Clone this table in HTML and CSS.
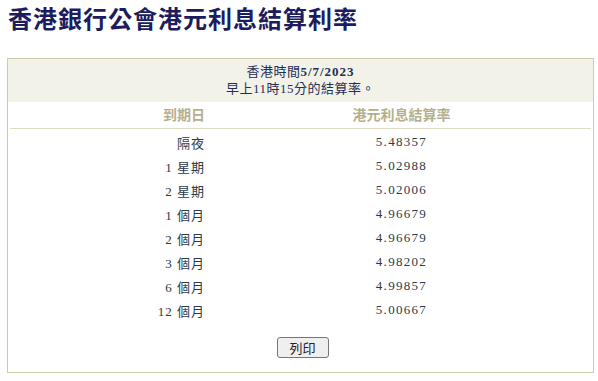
FILE: index.html
```html
<!DOCTYPE html>
<html lang="zh-Hant">
<head>
<meta charset="utf-8">
<link rel="stylesheet" href="styles.css">
</head>
<body>
<h1 class="title">香港銀行公會港元利息結算利率</h1>
<div class="box">
  <div class="stamp">
    <div>香港時間<b>5/7/2023</b></div>
    <div>早上11時15分的結算率。</div>
  </div>
  <table class="rates">
    <thead>
      <tr><th class="c1">到期日</th><th class="c2">港元利息結算率</th></tr>
    </thead>
    <tbody>
      <tr><td class="c1">隔夜</td><td class="c2">5.48357</td></tr>
      <tr><td class="c1">1 星期</td><td class="c2">5.02988</td></tr>
      <tr><td class="c1">2 星期</td><td class="c2">5.02006</td></tr>
      <tr><td class="c1">1 個月</td><td class="c2">4.96679</td></tr>
      <tr><td class="c1">2 個月</td><td class="c2">4.96679</td></tr>
      <tr><td class="c1">3 個月</td><td class="c2">4.98202</td></tr>
      <tr><td class="c1">6 個月</td><td class="c2">4.99857</td></tr>
      <tr><td class="c1">12 個月</td><td class="c2">5.00667</td></tr>
    </tbody>
  </table>
  <div class="actions"><button class="print" type="button">列印</button></div>
</div>
</body>
</html>
```
FILE: styles.css
```css
html, body {
  margin: 0;
  padding: 0;
  background: #ffffff;
}
body {
  font-family: "Liberation Serif", "Noto Sans CJK TC", serif;
  font-size: 13px;
  color: #2b3a4a;
}
.title {
  margin: 0 0 24px 0;
  padding: 2px 0 0 8px;
  font-family: "Noto Sans CJK TC", sans-serif;
  font-weight: 700;
  font-size: 24px;
  line-height: 32px;
  letter-spacing: 1px;
  color: #1c1c5e;
}
.box {
  margin-left: 7px;
  width: 587px;
  height: 315px;
  box-sizing: border-box;
  border: 1px solid #cfcca8;
  display: flex;
  flex-direction: column;
}
.stamp {
  background: #f3f2e8;
  text-align: center;
  padding: 4px 0 5px;
  line-height: 17px;
  color: #1f2f55;
  letter-spacing: 0.5px;
}
.stamp b {
  font-weight: 700;
  letter-spacing: 1px;
}
.rates {
  margin: 0 2px;
  width: calc(100% - 4px);
  border-collapse: collapse;
  table-layout: fixed;
}
.rates th {
  font-family: "Noto Sans CJK TC", sans-serif;
  font-size: 14px;
  font-weight: 700;
  color: #b4b08e;
  height: 23px;
  padding: 0 0 3px 0;
  border-bottom: 1px solid #dedcc4;
  vertical-align: middle;
}
.rates td {
  height: 24px;
  padding: 0;
  letter-spacing: 1px;
}
.rates tbody tr:first-child td {
  padding-top: 1px;
}
.c1 {
  width: 195px;
  text-align: right;
}
th.c1 {
  padding-right: 7px;
}
td.c1 {
  padding-right: 7px;
}
.c2 {
  text-align: center;
}
td.c2 {
  letter-spacing: 1.3px;
}
.actions {
  display: flex;
  justify-content: center;
  margin-top: 15px;
  padding-left: 4px;
}
.print {
  width: 52px;
  height: 21px;
  padding: 0;
  font-family: "Noto Sans CJK TC", sans-serif;
  font-size: 13px;
  color: #222222;
  background: #efefef;
  border: 1px solid #767676;
  border-radius: 3px;
}
```
